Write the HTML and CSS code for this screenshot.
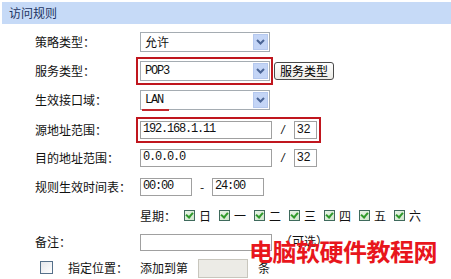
FILE: index.html
```html
<!DOCTYPE html>
<html lang="zh-CN">
<head>
    <meta charset="UTF-8">
    <title>访问规则</title>
    <link rel="stylesheet" href="styles.css">
</head>
<body>
    <div class="panel">
        <div class="panel-title">访问规则</div>

        <div class="form">
            <!-- 策略类型 -->
            <div class="row r1">
                <span class="label">策略类型：</span>
                <div class="select"><span class="val">允许</span><span class="drop"><svg width="9" height="6" viewBox="0 0 9 6"><path d="M1 1 L4.5 4.5 L8 1" fill="none" stroke="#4b6596" stroke-width="2"/></svg></span></div>
            </div>

            <!-- 服务类型 -->
            <div class="row r2">
                <span class="label">服务类型：</span>
                <div class="mark">
                    <div class="select"><span class="val mono">POP3</span><span class="drop"><svg width="9" height="6" viewBox="0 0 9 6"><path d="M1 1 L4.5 4.5 L8 1" fill="none" stroke="#4b6596" stroke-width="2"/></svg></span></div>
                </div>
                <button class="btn">服务类型</button>
            </div>

            <!-- 生效接口域 -->
            <div class="row r3">
                <span class="label">生效接口域：</span>
                <div class="select"><span class="val mono underline">LAN</span><span class="drop"><svg width="9" height="6" viewBox="0 0 9 6"><path d="M1 1 L4.5 4.5 L8 1" fill="none" stroke="#4b6596" stroke-width="2"/></svg></span></div>
            </div>

            <!-- 源地址范围 -->
            <div class="row r4">
                <span class="label">源地址范围：</span>
                <div class="mark wide">
                    <div class="input ip mono">192.168.1.11</div>
                    <span class="slash">/</span>
                    <div class="input mask">32</div>
                </div>
            </div>

            <!-- 目的地址范围 -->
            <div class="row r5">
                <span class="label">目的地址范围：</span>
                <div class="input ip mono">0.0.0.0</div>
                <span class="slash">/</span>
                <div class="input mask">32</div>
            </div>

            <!-- 时间表 -->
            <div class="row r6">
                <span class="label">规则生效时间表：</span>
                <div class="input time mono">00:00</div>
                <span class="dash">-</span>
                <div class="input time mono">24:00</div>
            </div>

            <!-- 星期 -->
            <div class="row r7">
                <span class="label"></span>
                <span class="week">星期：</span>
                <div class="days">
                    <span class="day"><span class="cb on"></span>日</span>
                    <span class="day"><span class="cb on"></span>一</span>
                    <span class="day"><span class="cb on"></span>二</span>
                    <span class="day"><span class="cb on"></span>三</span>
                    <span class="day"><span class="cb on"></span>四</span>
                    <span class="day"><span class="cb on"></span>五</span>
                    <span class="day"><span class="cb on"></span>六</span>
                </div>
            </div>

            <!-- 备注 -->
            <div class="row r8">
                <span class="label">备注：</span>
                <div class="input ip"></div>
                <span class="opt">（可选）</span>
            </div>

            <!-- 指定位置 -->
            <div class="row r9">
                <span class="pos-check"><span class="cb big"></span></span>
                <span class="pos-label">指定位置：</span>
                <span>添加到第</span>
                <div class="input grey"></div>
                <span class="unit">条</span>
            </div>
        </div>

        <div class="watermark">电脑软硬件教程网</div>
    </div>
</body>
</html>
```

FILE: styles.css
```css
body {
    margin: 0;
    background: #fff;
    font-family: "Noto Sans CJK SC", "DejaVu Sans", sans-serif;
    font-size: 12px;
    color: #111;
}
.panel {
    position: relative;
    width: 451px;
    height: 279px;
    overflow: hidden;
}
/* 标题栏 */
.panel-title {
    margin: 2px 0 0 2px;
    height: 22px;
    line-height: 22px;
    padding-left: 7px;
    background: #c6daf7;
    color: #1d3462;
    font-size: 12px;
}
.form {
    padding-top: 4px;
}
.row {
    display: flex;
    align-items: center;
    line-height: 1;
}
.r1 { height: 28px; }
.r2 { height: 29px; }
.r3 { height: 30px; }
.r4 { height: 29px; }
.r5 { height: 28px; }
.r6 { height: 30px; }
.r7 { height: 27px; }
.r8 { height: 26px; }
.r9 { height: 26px; }
.label {
    width: 105px;
    padding-left: 35px;
    flex: none;
}
.mono {
    font-family: "Liberation Mono", monospace;
    font-size: 12px;
    letter-spacing: -1.2px;
}
/* 下拉框 */
.select {
    display: flex;
    align-items: center;
    justify-content: space-between;
    width: 128px;
    height: 18px;
    border: 1px solid #a5acb2;
    background: #fff;
}
.select .val {
    padding-left: 4px;
}
.underline {
    position: relative;
}
.underline::after {
    content: "";
    position: absolute;
    left: 1px;
    right: -6px;
    bottom: -5px;
    height: 2px;
    background: #c4262c;
}
.drop {
    display: flex;
    align-items: center;
    justify-content: center;
    width: 15px;
    height: 16px;
    margin-right: 1px;
    background: #c4d5f6;
    border: 1px solid #b5c8ee;
    box-sizing: border-box;
}
/* 红框标注 */
.mark {
    display: flex;
    align-items: center;
    margin-left: -4px;
    padding: 2px 1px 2px 2px;
    border: 2px solid #c0161e;
}
.mark.wide {
    padding: 2px;
}
.btn {
    margin-left: 1px;
    height: 18px;
    padding: 0 5px;
    border: 1px solid #4a4a4a;
    border-radius: 3px;
    background: linear-gradient(#fff, #ecebe6);
    font-family: "Noto Sans CJK SC", sans-serif;
    font-size: 12px;
    line-height: 16px;
    color: #000;
}
/* 输入框 */
.input {
    height: 15px;
    border: 1px solid #a0a0a0;
    background: #fff;
    line-height: 15px;
    padding: 0 2px;
    box-sizing: content-box;
}
.input.ip {
    width: 126px;
}
.input.mask {
    width: 17px;
    font-family: "Liberation Sans", sans-serif;
    font-size: 12px;
}
.input.time {
    width: 46px;
    height: 16px;
}
.r5 .input, .r4 .input {
    height: 16px;
}
.slash {
    width: 22px;
    text-align: center;
    font-family: "Liberation Sans", sans-serif;
    font-style: italic;
}
.dash {
    width: 20px;
    text-align: center;
}
/* 星期 */
.week {
    width: 44px;
}
.days {
    display: flex;
}
.day {
    display: flex;
    align-items: center;
    width: 35px;
}
.cb {
    display: inline-block;
    position: relative;
    width: 9px;
    height: 9px;
    border: 1px solid #3f6a5c;
    background: linear-gradient(135deg, #e8f3e6, #cfe6cc);
    margin-right: 4px;
}
.cb.on::after {
    content: "";
    position: absolute;
    left: 1px;
    top: 0;
    width: 3px;
    height: 5px;
    border: solid #2e9a2a;
    border-width: 0 2px 2px 0;
    transform: translate(1px, 0) rotate(40deg);
}
.cb.big {
    width: 11px;
    height: 11px;
    border-color: #55708a;
    background: linear-gradient(135deg, #e4e6ea, #fff);
    margin-right: 0;
}
.opt {
    margin-left: 8px;
    margin-top: -3px;
}
.pos-check {
    padding-left: 40px;
    box-sizing: border-box;
    flex: none;
    width: 68px;
}
.pos-label {
    width: 72px;
    flex: none;
}
.input.grey {
    width: 44px;
    height: 17px;
    margin-left: 10px;
    background: #ecebe6;
    border-color: #c8c6bd;
}
.unit {
    margin-left: 10px;
}
/* 水印 */
.watermark {
    position: absolute;
    left: 249px;
    top: 240px;
    font-size: 24px;
    font-weight: bold;
    color: #e8161c;
    line-height: 22px;
    letter-spacing: -0.5px;
}
```
